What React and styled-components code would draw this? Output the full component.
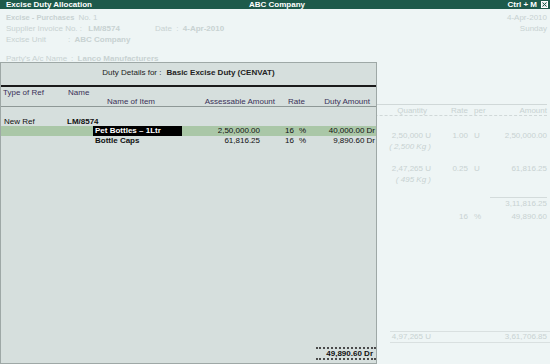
import styled, { createGlobalStyle } from "styled-components";

const Global = createGlobalStyle`
    html, body {
        margin: 0;
        padding: 0;
        background: #eef5f5;
    }
    * {
        box-sizing: border-box;
    }
`;

const Screen = styled.div`
    position: relative;
    width: 550px;
    height: 364px;
    overflow: hidden;
    background: #eef5f5;
    font-family: "Liberation Sans", Arial, sans-serif;
    font-size: 8px;
    white-space: nowrap;
    display: flex;
    flex-direction: column;
`;

const TitleBar = styled.div`
    height: 9px;
    background: #1e5a4b;
    color: #ffffff;
    font-weight: bold;
    font-size: 8px;
    line-height: 9px;
    display: grid;
    grid-template-columns: 1fr auto 1fr;
    padding: 0 2px 0 6px;
`;

const TitleRight = styled.div`
    display: flex;
    justify-content: flex-end;
    align-items: center;
    gap: 4px;
`;

const CloseBox = styled.span`
    width: 7px;
    height: 7px;
    background: #dfe8e6;
    border: 1px solid #ffffff;
    display: flex;
    align-items: center;
    justify-content: center;
`;

const Voucher = styled.div`
    flex: 1;
    display: flex;
    flex-direction: column;
    padding: 3px 3px 21px 6px;
    color: #c8d2d2;
    line-height: 11px;
`;

const HeaderBlock = styled.div`
    display: flex;
    justify-content: space-between;
`;

const Line = styled.div`
    display: flex;
    height: 11px;
    margin-top: ${(p) => p.$gap || 0}px;
`;

const Label = styled.span`
    flex-shrink: 0;
    min-width: ${(p) => p.$w || 0}px;
    padding-right: 4px;
    font-weight: ${(p) => (p.$bold ? "bold" : "normal")};
    font-size: ${(p) => (p.$bold ? "7.5px" : "8px")};
`;

const Strong = styled.span`
    font-weight: bold;
    margin-left: ${(p) => p.$ml || 0}px;
`;

const DateBlock = styled.div`
    text-align: right;
`;

const Table = styled.div`
    margin-top: 40px;
    display: flex;
    flex-direction: column;
    flex: 1;
`;

const Row = styled.div`
    display: flex;
    height: 11px;
    margin-top: ${(p) => p.$mt || 0}px;
    font-style: ${(p) => (p.$italic ? "italic" : "normal")};
`;

const HeadRow = styled(Row)`
    border-top: 1px solid #d0d8d8;
    border-bottom: 1px dashed #d0d8d8;
    height: 12px;
`;

const Particulars = styled.div`
    flex: 1;
`;

const Qty = styled.div`
    width: 65px;
    text-align: right;
    padding-right: ${(p) => p.$pr ?? 4}px;
`;

const Rate = styled.div`
    width: 33px;
    text-align: right;
`;

const Per = styled.div`
    width: 22px;
    padding-left: 6px;
`;

const Amount = styled.div`
    width: 57px;
    text-align: right;
    border-top: ${(p) => (p.$rule ? "1px solid #d3dbdb" : "none")};
`;

const Totals = styled.div`
    margin-top: auto;
    margin-left: auto;
    margin-right: -3px;
    width: 160px;
    height: 12px;
    border-top: 1px solid #d9e0e0;
    border-bottom: 1px solid #d9e0e0;
    display: flex;
    line-height: 10px;
`;

const TotalQty = styled.div`
    width: 41px;
    text-align: right;
`;

const TotalAmt = styled.div`
    flex: 1;
    text-align: right;
    padding-right: 3px;
`;

/* Duty allocation popup that lies over the voucher */
const Popup = styled.div`
    position: absolute;
    left: 0;
    top: 62px;
    width: 377px;
    height: 302px;
    background: #d6dfdd;
    border: 1px solid #9ea8a6;
    display: flex;
    flex-direction: column;
    color: #111;
    line-height: 9px;
`;

const Caption = styled.div`
    height: 24px;
    border-bottom: 2px solid #1a1a1a;
    display: flex;
    justify-content: center;
    align-items: center;
    padding-bottom: 4px;
    gap: 5px;
    color: #222;
`;

const ColHeads = styled.div`
    padding-top: 1px;
    border-bottom: 1px solid #8e9896;
    color: #3a3158;
`;

const HeadLine = styled.div`
    display: grid;
    grid-template-columns: ${(p) => p.$cols};
    height: 9px;
`;

const Cell = styled.div`
    text-align: ${(p) => p.$align || "left"};
    padding-left: ${(p) => p.$pl || 0}px;
    padding-right: ${(p) => p.$pr || 0}px;
    font-weight: ${(p) => (p.$bold ? "bold" : "normal")};
`;

const RefRow = styled.div`
    display: grid;
    grid-template-columns: 63px 1fr;
    height: 9px;
    margin-top: 10px;
    padding-left: 3px;
`;

const ItemRow = styled.div`
    display: grid;
    grid-template-columns: 92px 90px 77px 46px 1fr;
    height: ${(p) => (p.$active ? 10 : 9)}px;
    line-height: ${(p) => (p.$active ? 10 : 9)}px;
    background: ${(p) => (p.$active ? "#aac7a7" : "transparent")};
    font-weight: bold;
`;

const ItemName = styled.div`
    background: ${(p) => (p.$active ? "#000" : "transparent")};
    color: ${(p) => (p.$active ? "#fff" : "#111")};
    padding-left: 2px;
    margin-right: 1px;
`;

const Pct = styled.span`
    margin-left: 5px;
`;

const PopFooter = styled.div`
    margin-top: auto;
    margin-bottom: 3px;
    display: flex;
    justify-content: flex-end;
`;

const TotalBox = styled.div`
    width: 60px;
    height: 13px;
    border-top: 2px dotted #4a4a4a;
    border-bottom: 2px dotted #4a4a4a;
    text-align: right;
    padding-right: 3px;
    font-weight: bold;
    line-height: 9px;
`;

const items = [
    { name: "Pet Bottles – 1Ltr", value: "2,50,000.00", rate: "16", duty: "40,000.00 Dr", active: true },
    { name: "Bottle Caps", value: "61,816.25", rate: "16", duty: "9,890.60 Dr" },
];

const lines = [
    { qty: "2,50,000 U", kg: "( 2,500 Kg )", rate: "1.00", amount: "2,50,000.00", mt: 14 },
    { qty: "2,47,265 U", kg: "( 495 Kg )", rate: "0.25", amount: "61,816.25", mt: 11 },
];

const App = () => {
    return (
        <>
            <Global />
            <Screen>
                <TitleBar>
                    <span>Excise Duty Allocation</span>
                    <span>ABC Company</span>
                    <TitleRight>
                        <span>Ctrl + M</span>
                        <CloseBox>
                            <svg width="5" height="5" viewBox="0 0 5 5">
                                <path d="M0.5 0.5 L4.5 4.5 M4.5 0.5 L0.5 4.5" stroke="#1e5a4b" strokeWidth="1" />
                            </svg>
                        </CloseBox>
                    </TitleRight>
                </TitleBar>
                <Voucher>
                    <HeaderBlock>
                        <div>
                            <Line>
                                <Label $bold>Excise - Purchases</Label>
                                <span>No. 1</span>
                            </Line>
                            <Line>
                                <Label $w={149}>
                                    Supplier Invoice No. : <Strong $ml={4}>LM/8574</Strong>
                                </Label>
                                <span>
                                    Date &nbsp;: <Strong $ml={2}>4-Apr-2010</Strong>
                                </span>
                            </Line>
                            <Line>
                                <Label $w={62}>Excise Unit</Label>
                                <span>
                                    : <Strong $ml={2}>ABC Company</Strong>
                                </span>
                            </Line>
                            <Line $gap={8}>
                                <Label $w={62}>Party's A/c Name</Label>
                                <span>
                                    : <Strong $ml={2}>Lanco Manufacturers</Strong>
                                </span>
                            </Line>
                        </div>
                        <DateBlock>
                            <div>4-Apr-2010</div>
                            <div>Sunday</div>
                        </DateBlock>
                    </HeaderBlock>
                    <Table>
                        <HeadRow>
                            <Particulars>Name of Item</Particulars>
                            <Qty $pr={8}>Quantity</Qty>
                            <Rate>Rate</Rate>
                            <Per>per</Per>
                            <Amount>Amount</Amount>
                        </HeadRow>
                        {lines.map((l) => (
                            <div key={l.qty}>
                                <Row $mt={l.mt}>
                                    <Particulars />
                                    <Qty>{l.qty}</Qty>
                                    <Rate>{l.rate}</Rate>
                                    <Per>U</Per>
                                    <Amount>{l.amount}</Amount>
                                </Row>
                                <Row $italic>
                                    <Particulars />
                                    <Qty>{l.kg}</Qty>
                                    <Rate />
                                    <Per />
                                    <Amount />
                                </Row>
                            </div>
                        ))}
                        <Row $mt={12}>
                            <Particulars />
                            <Qty />
                            <Rate />
                            <Per />
                            <Amount $rule>3,11,816.25</Amount>
                        </Row>
                        <Row $mt={3}>
                            <Particulars />
                            <Qty />
                            <Rate>16</Rate>
                            <Per>%</Per>
                            <Amount>49,890.60</Amount>
                        </Row>
                        <Totals>
                            <TotalQty>4,97,265 U</TotalQty>
                            <TotalAmt>3,61,706.85</TotalAmt>
                        </Totals>
                    </Table>
                </Voucher>

                <Popup>
                    <Caption>
                        <span>Duty Details for :</span>
                        <Strong>Basic Excise Duty (CENVAT)</Strong>
                    </Caption>
                    <ColHeads>
                        <HeadLine $cols="67px 1fr">
                            <Cell $pl={2}>Type of Ref</Cell>
                            <Cell>Name</Cell>
                        </HeadLine>
                        <HeadLine $cols="106px 80px 88px 30px 1fr">
                            <Cell />
                            <Cell>Name of Item</Cell>
                            <Cell $align="right">Assessable Amount</Cell>
                            <Cell $align="right">Rate</Cell>
                            <Cell $align="right" $pr={6}>Duty Amount</Cell>
                        </HeadLine>
                    </ColHeads>
                    <RefRow>
                        <Cell>New Ref</Cell>
                        <Cell $bold>LM/8574</Cell>
                    </RefRow>
                    {items.map((it) => (
                        <ItemRow key={it.name} $active={it.active}>
                            <div />
                            <ItemName $active={it.active}>{it.name}</ItemName>
                            <Cell $align="right">{it.value}</Cell>
                            <Cell $align="right">
                                {it.rate}
                                <Pct>%</Pct>
                            </Cell>
                            <Cell $align="right" $pr={1}>{it.duty}</Cell>
                        </ItemRow>
                    ))}
                    <PopFooter>
                        <TotalBox>49,890.60 Dr</TotalBox>
                    </PopFooter>
                </Popup>
            </Screen>
        </>
    );
};

export default App;
